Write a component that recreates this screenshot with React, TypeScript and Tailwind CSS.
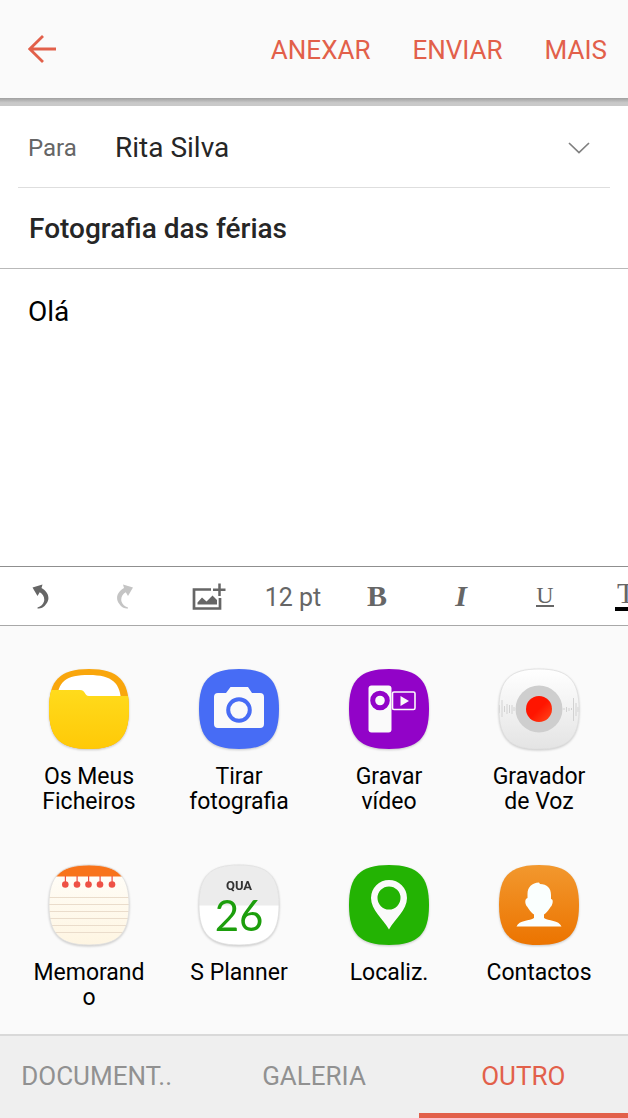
import type { ReactNode } from 'react';

const SQUIRCLE = 'M40 0C69 0 80 11 80 40S69 80 40 80 0 69 0 40 11 0 40 0Z';

function Tile({ id, fill, outline, children }: { id: string; fill: string; outline?: boolean; children: ReactNode }) {
  return (
    <svg viewBox="0 0 80 80" className="block size-20 overflow-visible drop-shadow-[0_1px_1px_rgba(0,0,0,0.2)]" aria-hidden="true">
      <defs>
        <clipPath id={`${id}-clip`}>
          <path d={SQUIRCLE} />
        </clipPath>
        <linearGradient id="files-front" x1="0" y1="0" x2="0" y2="1">
          <stop offset="0" stopColor="#ffdb1c" />
          <stop offset="1" stopColor="#ffc907" />
        </linearGradient>
        <linearGradient id="voice-back" x1="0" y1="0" x2="0" y2="1">
          <stop offset="0" stopColor="#ffffff" />
          <stop offset="1" stopColor="#e4e4e4" />
        </linearGradient>
        <linearGradient id="memo-back" x1="0" y1="0" x2="0" y2="1">
          <stop offset="0" stopColor="#fffefa" />
          <stop offset="1" stopColor="#fef5e2" />
        </linearGradient>
        <linearGradient id="contact-back" x1="0" y1="0" x2="0" y2="1">
          <stop offset="0" stopColor="#f2982e" />
          <stop offset="1" stopColor="#ec7400" />
        </linearGradient>
        <linearGradient id="record-dot" x1="0" y1="0" x2="1" y2="1">
          <stop offset="0.5" stopColor="#ff1500" />
          <stop offset="1" stopColor="#ff4a1c" />
        </linearGradient>
      </defs>
      <g clipPath={`url(#${id}-clip)`}>
        <rect width="80" height="80" fill={fill} />
        {children}
      </g>
      {outline && <path d={SQUIRCLE} fill="none" stroke="#dedede" strokeWidth="0.800" />}
    </svg>
  );
}

const apps: { label: string; icon: ReactNode }[] = [
  {
    label: 'Os Meus Ficheiros',
    icon: (
      <Tile id="files" fill="#f9a60c">
        <path d="M8 34C8 12 17 6 40 6S72 14 72 34Z" fill="#fff" />
        <path d="M0 21H31C37 21 35 27 40 27H80V80H0Z" fill="url(#files-front)" />
      </Tile>
    ),
  },
  {
    label: 'Tirar fotografia',
    icon: (
      <Tile id="camera" fill="#476cf5">
        <path d="M19 24H27L31.500 18H49L53 24H61Q65 24 65 28V55Q65 59 61 59H19Q15 59 15 55V28Q15 24 19 24Z" fill="#fafafa" />
        <circle cx="40" cy="41" r="10.800" fill="#fafafa" stroke="#476cf5" strokeWidth="4" />
      </Tile>
    ),
  },
  {
    label: 'Gravar vídeo',
    icon: (
      <Tile id="video" fill="#9203c8">
        <rect x="19.500" y="16.500" width="23" height="47" rx="3" fill="#fafafa" />
        <circle cx="31" cy="31.500" r="7.300" fill="#fafafa" stroke="#9203c8" strokeWidth="5" />
        <rect x="43.500" y="23" width="22.500" height="17.500" rx="1.500" fill="#9203c8" stroke="#fafafa" strokeWidth="1.600" />
        <path d="M51.500 27L60 32L51.500 37Z" fill="#fafafa" />
      </Tile>
    ),
  },
  {
    label: 'Gravador de Voz',
    icon: (
      <Tile id="voice" fill="url(#voice-back)" outline>
        <path d="M0.500 36V44M3 31V48M5.500 37V43M8 35V45M10.500 36V44M13 36V45M15 38V42M65 39V41M67.500 38V43M70 39V42M72.500 39V41M74.500 29V52M77 34V47M79 38V43" stroke="#d2d2d2" strokeWidth="1" />
        <circle cx="40" cy="40" r="23.500" fill="#cecece" />
        <circle cx="40" cy="40" r="13" fill="url(#record-dot)" />
      </Tile>
    ),
  },
  {
    label: 'Memorando',
    icon: (
      <Tile id="memo" fill="url(#memo-back)" outline>
        <rect width="80" height="11.500" fill="#f8731a" />
        <path d="M0 32.500H80M0 39.500H80M0 46.500H80M0 53.500H80M0 60.500H80M0 67.500H80" stroke="#eadccb" strokeWidth="1" />
        {[16.3, 28, 39.5, 51, 63].map((x) => (
          <g key={x} fill="#ee5145">
            <rect x={x - 0.5} y="11" width="1.200" height="8" />
            <circle cx={x} cy="19.500" r="3.300" />
          </g>
        ))}
      </Tile>
    ),
  },
  {
    label: 'S Planner',
    icon: (
      <Tile id="planner" fill="#ffffff" outline>
        <rect width="80" height="40.500" fill="#ececec" />
        <text x="40" y="25" textAnchor="middle" className="fill-[#333333] font-['Roboto',sans-serif] text-[13px] font-bold">QUA</text>
        <text x="40" y="66" textAnchor="middle" className="fill-[#1c9e0c] font-['Lato',sans-serif] text-[42px]">26</text>
      </Tile>
    ),
  },
  {
    label: 'Localiz.',
    icon: (
      <Tile id="places" fill="#23b303">
        <path fillRule="evenodd" d="M40 64.500C34 54 22 45 22 33A18 18 0 0 1 58 33C58 45 46 54 40 64.500ZM40 21.500A11.500 11.500 0 1 0 40 44.500A11.500 11.500 0 1 0 40 21.500Z" fill="#fafafa" />
      </Tile>
    ),
  },
  {
    label: 'Contactos',
    icon: (
      <Tile id="contacts" fill="url(#contact-back)">
        <path d="M40 17.500L41 19C48 19 52 23 52 30V34C54.500 34 54 38 52.500 41C51 42 50 46 45 49.500V53C49 56 60 55 62.500 61.500H17.500C20 55 31 56 35 53V49.500C30 46 29 42 27.500 41C26 38 25.500 34 28.500 33V29C28.500 22 33 18 40 17.500Z" fill="#fafffe" />
      </Tile>
    ),
  },
];

function ToolButton({ label, children }: { label: string; children: ReactNode }) {
  return (
    <button type="button" aria-label={label} className="flex h-full w-[84px] shrink-0 items-center justify-center">
      {children}
    </button>
  );
}

const tabs = [
  { label: 'DOCUMENT..', active: false },
  { label: 'GALERIA', active: false },
  { label: 'OUTRO', active: true },
];

export default function App() {
  return (
    <div className="flex min-h-screen flex-col overflow-x-hidden bg-white font-['Roboto',sans-serif] text-[#262626]">
      <header className="flex h-[98px] shrink-0 items-center justify-between bg-[#fafafa] pr-[21px] pl-7">
        <button type="button" aria-label="Voltar">
          <svg viewBox="0 0 28 28" className="block size-7" fill="none" stroke="#e2604a" strokeWidth="2.800" aria-hidden="true">
            <path d="M28 14H2M15 1L1.800 14L15 27" />
          </svg>
        </button>
        <nav className="flex gap-[42px] pt-px text-[26px] leading-8 text-[#e2604a]">
          <button type="button">ANEXAR</button>
          <button type="button">ENVIAR</button>
          <button type="button">MAIS</button>
        </nav>
      </header>
      <div className="h-2 shrink-0 bg-linear-to-b from-[#a0a0a0] to-[#c9c9c9] to-60%" />

      <main className="flex grow flex-col">
        <div className="mx-[18px] flex h-[82px] items-center border-b border-[#dedede] pt-0.5 pr-5 pl-[10px]">
          <label htmlFor="to" className="w-[87px] shrink-0 text-[24px] text-[#666666]">Para</label>
          <input id="to" defaultValue="Rita Silva" className="min-w-0 grow bg-transparent text-[28px] outline-none" />
          <button type="button" aria-label="Mostrar Cc e Bcc">
            <svg viewBox="0 0 22 12" className="block h-3 w-[22px]" fill="none" stroke="#808080" strokeWidth="1.700" aria-hidden="true">
              <path d="M1 1L11 10.500L21 1" />
            </svg>
          </button>
        </div>
        <div className="flex h-[81px] items-center border-b border-[#b9b9b9] px-[29px] pt-0.5">
          <input aria-label="Assunto" defaultValue="Fotografia das férias" className="w-full bg-transparent text-[28px] font-medium outline-none" />
        </div>
        <textarea aria-label="Mensagem" defaultValue="Olá" className="block min-h-40 w-full grow resize-none px-7 py-6 text-[28px] leading-[38px] text-black outline-none" />
      </main>

      <div role="toolbar" aria-label="Formatação" className="-ml-px flex h-[60px] shrink-0 overflow-hidden border-y border-t-[#8f8f8f] border-b-[#a8a8a8] text-[#666666]">
        <ToolButton label="Anular">
          <svg viewBox="0 0 18 25" className="block h-[25px] w-[18px]" fill="currentColor" aria-hidden="true">
            <path d="M0.500 3.500L10.500 0.500L9.500 4C16 7.500 18.500 14 14.500 19.500C12 23.300 9.500 24.500 5.500 24.500V23.500C9 22.500 11 20.500 12 17.500C13 13.500 11 10 7.700 8.300L5.500 12Z" />
          </svg>
        </ToolButton>
        <ToolButton label="Refazer">
          <svg viewBox="0 0 18 25" className="block h-[25px] w-[18px]" fill="#c4c4c4" aria-hidden="true">
            <path d="M17 3.500L7 0.500L8 4C1.500 7.500 -1 14 3 19.500C5.500 23.300 8 24.500 12 24.500V23.500C8.500 22.500 6.500 20.500 5.500 17.500C4.500 13.500 6.500 10 9.800 8.300L12 12Z" />
          </svg>
        </ToolButton>
        <ToolButton label="Inserir imagem">
          <svg viewBox="0 0 34 27" className="block h-[27px] w-[34px]" aria-hidden="true">
            <path d="M19 6.500H2V25.500H28V15" fill="none" stroke="currentColor" strokeWidth="2.700" />
            <path d="M5.500 21.500V19.500L10 14.500L14.500 18.500L20.500 12.500L25 17V21.500Z" fill="currentColor" />
            <path d="M27.500 0.500V13M21 6.800H33.500" stroke="currentColor" strokeWidth="2.500" />
          </svg>
        </ToolButton>
        <ToolButton label="Tamanho do texto, 12 pt">
          <span className="pt-1 text-[25px]">12 pt</span>
        </ToolButton>
        <ToolButton label="Negrito">
          <span className="font-['Liberation_Serif',serif] text-[30px] leading-8 font-bold">B</span>
        </ToolButton>
        <ToolButton label="Itálico">
          <span className="font-['Liberation_Serif',serif] text-[30px] leading-8 font-bold italic">I</span>
        </ToolButton>
        <ToolButton label="Sublinhado">
          <span className="border-b-2 border-current font-['Liberation_Serif',serif] text-[24px] leading-5">U</span>
        </ToolButton>
        <ToolButton label="Cor do texto">
          <span className="w-7 border-b-4 border-black pb-0.5 pl-0.5 text-left font-['Liberation_Serif',serif] text-[30px] leading-6">T</span>
        </ToolButton>
      </div>

      <section aria-label="Anexar" className="grid shrink-0 grid-cols-4 gap-y-[52px] bg-[#fafafa] px-[14px] pt-[43px] pb-[25px]">
        {apps.map((app) => (
          <button key={app.label} type="button" className="flex h-36 flex-col items-center gap-[15px] px-4">
            {app.icon}
            <span className="w-full text-center text-[23px] leading-[25px] text-black wrap-anywhere">{app.label}</span>
          </button>
        ))}
      </section>

      <nav className="grid h-[84px] shrink-0 grid-cols-3 border-t-2 border-[#d9d9d9] bg-[#efefef]">
        {tabs.map((tab) => (
          <button
            key={tab.label}
            type="button"
            aria-current={tab.active ? 'page' : undefined}
            className={
              tab.active
                ? 'border-b-[5px] border-[#e2604a] pt-1 text-[26px] text-[#e2604a]'
                : 'border-b-[5px] border-transparent pt-1 text-[26px] text-[#919191] first:pr-4'
            }
          >
            {tab.label}
          </button>
        ))}
      </nav>
    </div>
  );
}
